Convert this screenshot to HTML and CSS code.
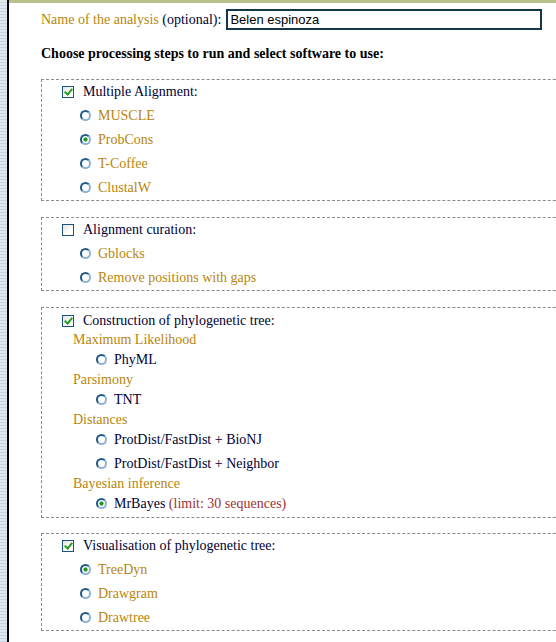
FILE: index.html
```html
<!DOCTYPE html>
<html>
<head>
<meta charset="utf-8">
<title>Analysis</title>
<link rel="stylesheet" href="styles.css">
</head>
<body>
<div class="page">
  <div class="rail"></div>
  <main class="main">
    <div class="name-row">
      <label class="name-label" for="name"><span class="gold">Name of the analysis</span> (optional):</label>
      <input id="name" class="name-input" type="text" value="Belen espinoza">
    </div>
    <h3 class="heading">Choose processing steps to run and select software to use:</h3>

    <div class="box">
      <label class="row step"><input type="checkbox" class="cb" checked><span>Multiple Alignment:</span></label>
      <label class="row opt"><input type="radio" class="rd" name="aln"><span class="gold">MUSCLE</span></label>
      <label class="row opt"><input type="radio" class="rd" name="aln" checked><span class="gold">ProbCons</span></label>
      <label class="row opt"><input type="radio" class="rd" name="aln"><span class="gold">T-Coffee</span></label>
      <label class="row opt"><input type="radio" class="rd" name="aln"><span class="gold">ClustalW</span></label>
    </div>

    <div class="box">
      <label class="row step"><input type="checkbox" class="cb"><span>Alignment curation:</span></label>
      <label class="row opt"><input type="radio" class="rd" name="cur"><span class="gold">Gblocks</span></label>
      <label class="row opt"><input type="radio" class="rd" name="cur"><span class="gold">Remove positions with gaps</span></label>
    </div>

    <div class="box box-tree">
      <label class="trow step first"><input type="checkbox" class="cb" checked><span>Construction of phylogenetic tree:</span></label>
      <div class="trow group gold ml">Maximum Likelihood</div>
      <label class="trow sub"><input type="radio" class="rd" name="tree"><span>PhyML</span></label>
      <div class="trow group gold">Parsimony</div>
      <label class="trow sub"><input type="radio" class="rd" name="tree"><span>TNT</span></label>
      <div class="trow group gold">Distances</div>
      <label class="trow sub spaced"><input type="radio" class="rd" name="tree"><span>ProtDist/FastDist + BioNJ</span></label>
      <label class="trow sub"><input type="radio" class="rd" name="tree"><span>ProtDist/FastDist + Neighbor</span></label>
      <div class="trow group gold">Bayesian inference</div>
      <label class="trow sub"><input type="radio" class="rd" name="tree" checked><span>MrBayes <span class="limit">(limit: 30 sequences)</span></span></label>
    </div>

    <div class="box">
      <label class="row step"><input type="checkbox" class="cb" checked><span>Visualisation of phylogenetic tree:</span></label>
      <label class="row opt"><input type="radio" class="rd" name="vis" checked><span class="gold">TreeDyn</span></label>
      <label class="row opt"><input type="radio" class="rd" name="vis"><span class="gold">Drawgram</span></label>
      <label class="row opt"><input type="radio" class="rd" name="vis"><span class="gold">Drawtree</span></label>
    </div>
  </main>
</div>
</body>
</html>
```

FILE: styles.css
```css
html, body {
  margin: 0;
  padding: 0;
  overflow: hidden;
  background: #fff;
}

body {
  font-family: "Liberation Serif", "Times New Roman", serif;
  font-size: 14px;
  color: #000033;
}

.page {
  display: flex;
  height: 642px;
}

.rail {
  flex: none;
  width: 7px;
  background: repeating-linear-gradient(to bottom, #dfe7ef 0 2px, #c6d3e0 2px 3px);
  border-right: 2px solid #000;
}

.main {
  flex: 1;
  min-width: 0;
  overflow: hidden;
  border-top: 3px solid #b8c18e;
  padding-left: 32px;
}

.gold { color: #b8860b; }
.limit { color: #a03232; }

.name-row {
  display: flex;
  align-items: center;
  margin-top: 6px;
}

.name-label { margin-right: 5px; }

.name-input {
  box-sizing: border-box;
  width: 316px;
  height: 21px;
  margin: 0;
  padding: 0 2px;
  border: 2px solid #14384b;
  font-family: "Liberation Sans", Arial, sans-serif;
  font-size: 13px;
  color: #000;
  outline: none;
}

.heading {
  margin: 16px 0 17px;
  font-size: 14px;
  line-height: 16px;
  font-weight: bold;
  color: #000;
}

.box {
  border: 1px dashed #8a8a8a;
  margin-right: -60px;
  margin-bottom: 16px;
}

.row {
  display: flex;
  align-items: flex-start;
  height: 24px;
  line-height: 24px;
}

.row.step { padding-left: 20px; }
.row.opt { padding-left: 38px; }

.row .cb { margin: 6px 9px 0 0; }
.row .rd { margin: 6px 7px 0 0; }

.box-tree {
  padding: 1px 0 3px;
  margin-bottom: 15px;
}

.trow {
  display: flex;
  align-items: flex-start;
  height: 20px;
  line-height: 20px;
}

.trow.step { padding-left: 20px; }
.trow.first { line-height: 24px; }
.trow.group { padding-left: 31px; }
.trow.ml { height: 21px; line-height: 21px; }
.trow.sub { padding-left: 54px; }
.trow.spaced { margin-bottom: 4px; }

.trow .cb { margin: 6px 9px 0 0; }
.trow .rd { margin: 4px 7px 0 0; }

/* checkbox */
.cb {
  appearance: none;
  -webkit-appearance: none;
  position: relative;
  flex: none;
  box-sizing: border-box;
  width: 12px;
  height: 12px;
  border: 1px solid #1c5180;
  background: linear-gradient(135deg, #e4e4de 0%, #fff 70%);
}

.cb:checked::after {
  content: "";
  position: absolute;
  left: 3px;
  top: 0px;
  width: 3px;
  height: 6px;
  border-right: 2px solid #21a121;
  border-bottom: 2px solid #21a121;
  transform: rotate(40deg);
}

/* radio */
.rd {
  appearance: none;
  -webkit-appearance: none;
  flex: none;
  box-sizing: border-box;
  width: 11px;
  height: 11px;
  border-radius: 50%;
  border: 2px solid #1f5a8a;
  border-right-color: #8fb3d3;
  border-bottom-color: #8fb3d3;
  background: #fff;
}

.rd:checked {
  background: radial-gradient(circle, #1e9a1e 0 1.8px, #fff 2.4px);
}
```
